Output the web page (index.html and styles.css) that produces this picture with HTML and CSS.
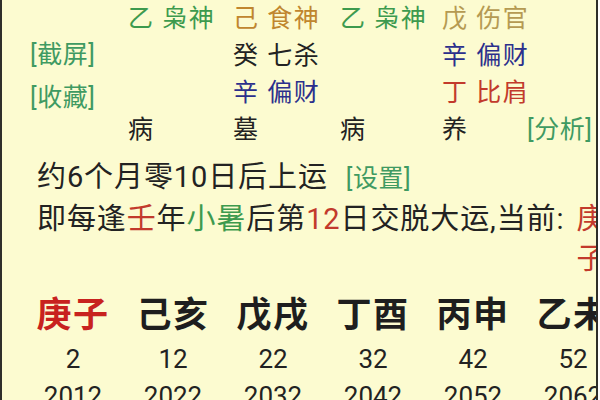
FILE: index.html
```html
<!DOCTYPE html>
<html lang="zh">
<head>
<meta charset="utf-8">
<link rel="stylesheet" href="styles.css">
</head>
<body>
<div class="screen">
  <div class="pillars">
    <div class="cell c2 r1 green">乙 枭神</div>
    <div class="cell c3 r1 orange">己 食神</div>
    <div class="cell c4 r1 green">乙 枭神</div>
    <div class="cell c5 r1 tan">戊 伤官</div>

    <div class="cell c1 r2 link">[截屏]</div>
    <div class="cell c3 r2 black">癸 七杀</div>
    <div class="cell c5 r2 blue">辛 偏财</div>

    <div class="cell c1 r3 link link-low">[收藏]</div>
    <div class="cell c3 r3 blue">辛 偏财</div>
    <div class="cell c5 r3 red">丁 比肩</div>

    <div class="cell c2 r4 black">病</div>
    <div class="cell c3 r4 black">墓</div>
    <div class="cell c4 r4 black">病</div>
    <div class="cell c5 r4 black">养</div>
    <div class="cell c6 r4 link">[分析]</div>
  </div>

  <div class="info">
    <div class="line">约6个月零10日后上运<span class="link setting">[设置]</span></div>
    <div class="line line-wrap">
      <span class="nowrap">即每逢<span class="red">壬</span>年<span class="green">小暑</span>后第<span class="red">12</span>日交脱大运,当前:&nbsp;</span><span class="current red">庚子</span>
    </div>
  </div>

  <div class="dayun">
    <div class="gz red-strong">庚子</div>
    <div class="gz">己亥</div>
    <div class="gz">戊戌</div>
    <div class="gz">丁酉</div>
    <div class="gz">丙申</div>
    <div class="gz">乙未</div>

    <div class="age">2</div>
    <div class="age">12</div>
    <div class="age">22</div>
    <div class="age">32</div>
    <div class="age">42</div>
    <div class="age">52</div>

    <div class="year">2012</div>
    <div class="year">2022</div>
    <div class="year">2032</div>
    <div class="year">2042</div>
    <div class="year">2052</div>
    <div class="year">2062</div>
  </div>
</div>
</body>
</html>
```

FILE: styles.css
```css
html, body {
  margin: 0;
  padding: 0;
  background: #ffffff;
}

body {
  font-family: Roboto, "Noto Sans CJK SC", sans-serif;
  color: #222222;
}

.screen {
  width: 594px;
  height: 400px;
  overflow: hidden;
  background: #fcfbd0;
  border-left: 2px solid #2e2e2a;
  border-right: 2px solid #2e2e2a;
}

/* ---------- top pillars ---------- */
.pillars {
  display: grid;
  grid-template-columns: 100px 105px 107px 102px 83px 1fr;
  grid-template-rows: repeat(4, 37px);
  padding-left: 26px;
  font-size: 25px;
  letter-spacing: 1.5px;
  white-space: nowrap;
}

.cell {
  display: flex;
  align-items: center;
  line-height: 1;
}

.c1 { grid-column: 1; }
.c2 { grid-column: 2; }
.c3 { grid-column: 3; }
.c4 { grid-column: 4; }
.c5 { grid-column: 5; }
.c6 { grid-column: 6; }
.r1 { grid-row: 1; }
.r2 { grid-row: 2; }
.r3 { grid-row: 3; }
.r4 { grid-row: 4; }

.link {
  color: #3f9a62;
  letter-spacing: 0.5px;
}

.pillars .link {
  padding-left: 2px;
}

.r2.link {
  padding-bottom: 3px;
}

.link-low {
  padding-top: 9px;
}

.green { color: #3d9a4e; }
.orange { color: #c0862e; }
.tan { color: #b59a52; }
.blue { color: #2b2f8c; }
.red { color: #c23a2c; }
.black { color: #222222; }

/* ---------- info lines ---------- */
.info {
  padding-left: 35px;
  margin-top: 9px;
  font-size: 29px;
  letter-spacing: 0.9px;
  line-height: 40px;
}

.line {
  white-space: nowrap;
}

.setting {
  font-size: 25px;
  margin-left: 18px;
}

.line-wrap {
  display: flex;
  align-items: flex-start;
}

.nowrap {
  white-space: nowrap;
}

.current {
  width: 1em;
  margin-left: 4px;
  white-space: normal;
  word-break: break-all;
}

/* ---------- dayun ---------- */
.dayun {
  display: grid;
  grid-template-columns: repeat(6, 100px);
  padding-left: 21px;
  margin-top: 15px;
  text-align: center;
  white-space: nowrap;
}

.gz {
  font-size: 35px;
  font-weight: bold;
  line-height: 44px;
  letter-spacing: 1.5px;
  color: #1e1e1e;
}

.red-strong {
  color: #c8221e;
}

.age, .year {
  font-size: 26px;
  color: #222222;
}

.age {
  line-height: 42px;
}

.year {
  line-height: 32px;
}
```
